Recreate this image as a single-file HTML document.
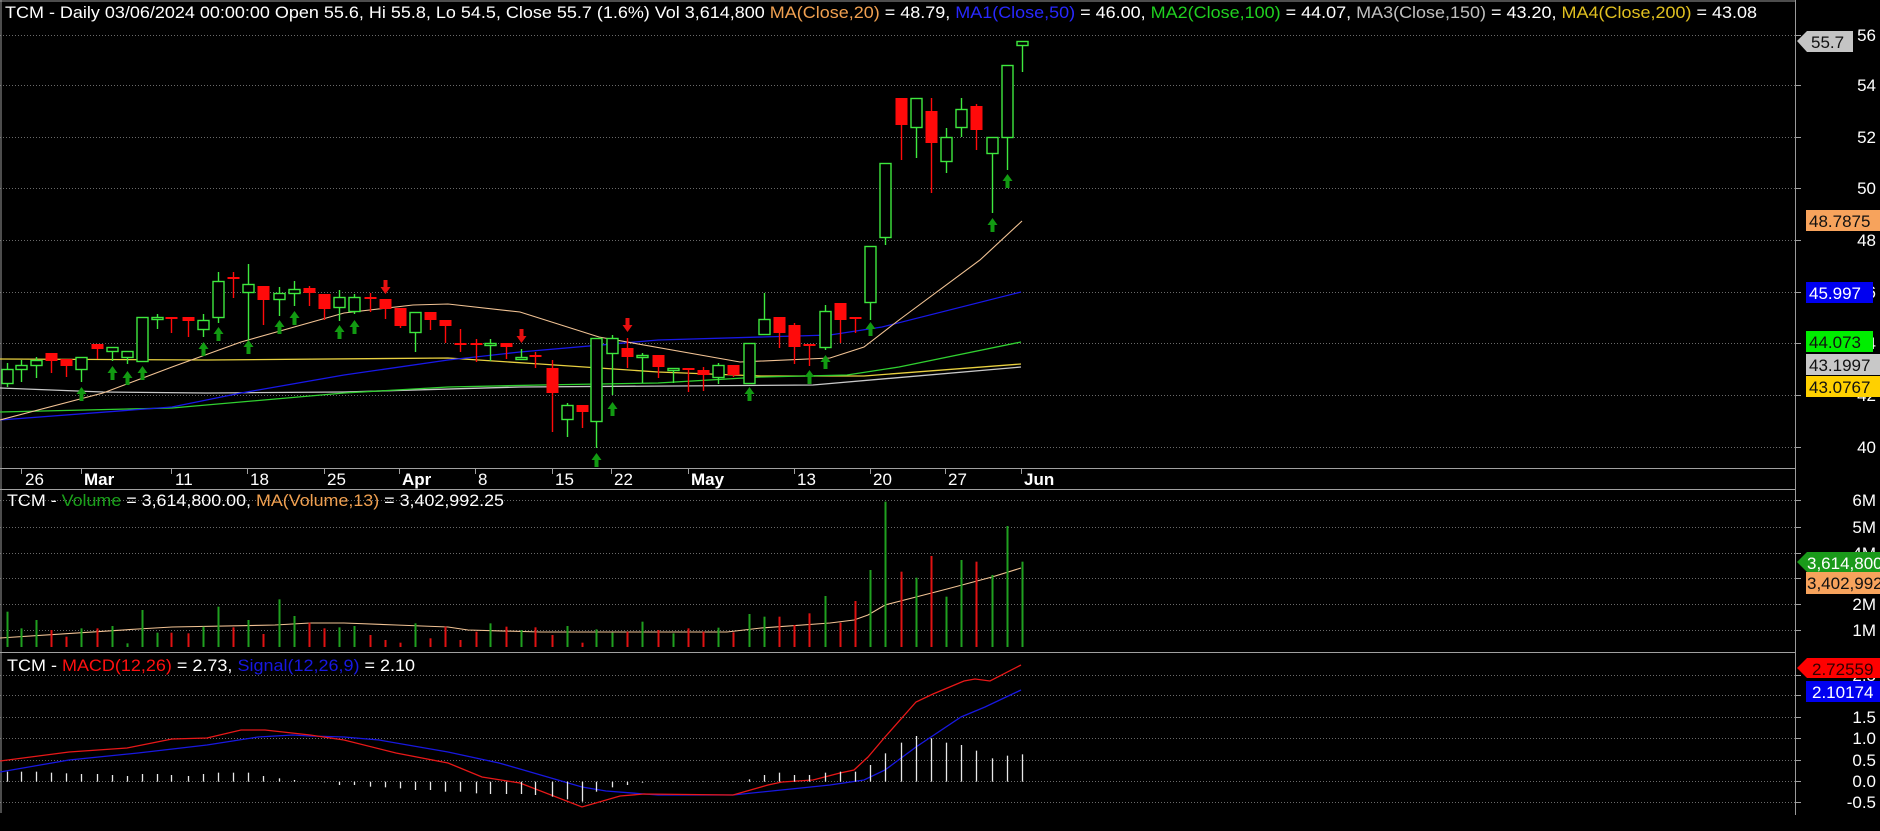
<!DOCTYPE html>
<html><head><meta charset="utf-8"><style>
html,body{margin:0;padding:0;background:#000;width:1880px;height:831px;overflow:hidden}
svg{display:block}
text{font-family:"Liberation Sans",Arial,sans-serif;font-size:17px;fill:#fff}
.ax{text-anchor:end}
.b{font-weight:bold}
</style></head><body>
<svg id="s" width="1880" height="831" xmlns="http://www.w3.org/2000/svg">
<rect width="1880" height="831" fill="#000"/>
<g id="grid" stroke="#6a6a6a" stroke-dasharray="1,2" stroke-width="1"></g>
<line x1="0" y1="1" x2="1795" y2="1" stroke="#9a9a9a"/>
<line x1="1" y1="0" x2="1" y2="813" stroke="#9a9a9a"/>
<line x1="1795.5" y1="0" x2="1795.5" y2="815" stroke="#9a9a9a"/>
<line x1="0" y1="468.5" x2="1795" y2="468.5" stroke="#a0a0a0"/>
<line x1="0" y1="489.5" x2="1795" y2="489.5" stroke="#a0a0a0"/>
<line x1="0" y1="652.5" x2="1795" y2="652.5" stroke="#a0a0a0"/>
<g id="ticks" stroke="#a0a0a0"></g>
<g id="lines" fill="none" stroke-width="1.3"></g>
<g id="cand"></g>
<g id="vol"></g>
<g id="hist" stroke="#e8e8e8" stroke-width="1.3"></g>
<g id="arr"></g>

<text x="5" y="18" textLength="1752" lengthAdjust="spacingAndGlyphs">TCM - Daily 03/06/2024 00:00:00 Open 55.6, Hi 55.8, Lo 54.5, Close 55.7 (1.6%) Vol 3,614,800 <tspan fill="#f0a050">MA(Close,20)</tspan> = 48.79, <tspan fill="#2828ff">MA1(Close,50)</tspan> = 46.00, <tspan fill="#20d020">MA2(Close,100)</tspan> = 44.07, <tspan fill="#c0c0c0">MA3(Close,150)</tspan> = 43.20, <tspan fill="#e0c020">MA4(Close,200)</tspan> = 43.08</text>
<text x="7" y="506" textLength="497" lengthAdjust="spacingAndGlyphs">TCM - <tspan fill="#1aa01a">Volume</tspan> = 3,614,800.00, <tspan fill="#f0a050">MA(Volume,13)</tspan> = 3,402,992.25</text>
<text x="7" y="671" textLength="408" lengthAdjust="spacingAndGlyphs">TCM - <tspan fill="#ff1010">MACD(12,26)</tspan> = 2.73, <tspan fill="#1818e0">Signal(12,26,9)</tspan> = 2.10</text>

<g>
<text x="25" y="485">26</text>
<text x="84" y="485" class="b">Mar</text>
<text x="175" y="485">11</text>
<text x="250" y="485">18</text>
<text x="327" y="485">25</text>
<text x="402" y="485" class="b">Apr</text>
<text x="478" y="485">8</text>
<text x="555" y="485">15</text>
<text x="614" y="485">22</text>
<text x="691" y="485" class="b">May</text>
<text x="797" y="485">13</text>
<text x="873" y="485">20</text>
<text x="948" y="485">27</text>
<text x="1024" y="485" class="b">Jun</text>
</g>

<g class="axl">
<text class="ax" x="1876" y="41">56</text>
<text class="ax" x="1876" y="91">54</text>
<text class="ax" x="1876" y="143">52</text>
<text class="ax" x="1876" y="194">50</text>
<text class="ax" x="1876" y="246">48</text>
<text class="ax" x="1876" y="298">46</text>
<text class="ax" x="1876" y="349">44</text>
<text class="ax" x="1876" y="401">42</text>
<text class="ax" x="1876" y="453">40</text>
<text class="ax" x="1876" y="506">6M</text>
<text class="ax" x="1876" y="533">5M</text>
<text class="ax" x="1876" y="559">4M</text>
<text class="ax" x="1876" y="584">3M</text>
<text class="ax" x="1876" y="610">2M</text>
<text class="ax" x="1876" y="636">1M</text>
<text class="ax" x="1876" y="681">2.5</text>
<text class="ax" x="1876" y="701">2.0</text>
<text class="ax" x="1876" y="723">1.5</text>
<text class="ax" x="1876" y="744">1.0</text>
<text class="ax" x="1876" y="766">0.5</text>
<text class="ax" x="1876" y="787">0.0</text>
<text class="ax" x="1876" y="808">-0.5</text>
</g>

<polygon points="1797,41 1807,31 1853,31 1853,52 1807,52" fill="#c4c4c4"/>
<text x="1811" y="48" style="fill:#111">55.7</text>
<rect x="1806" y="210" width="74" height="21" fill="#f7a35c"/><text x="1809" y="227" style="fill:#111">48.7875</text>
<rect x="1806" y="282" width="67" height="21" fill="#0000f0"/><text x="1809" y="299">45.997</text>
<rect x="1806" y="331" width="67" height="21" fill="#00ee00"/><text x="1809" y="348" style="fill:#111">44.073</text>
<rect x="1806" y="354" width="74" height="21" fill="#c8c8c8"/><text x="1809" y="371" style="fill:#111">43.1997</text>
<rect x="1806" y="376" width="74" height="21" fill="#ffd000"/><text x="1809" y="393" style="fill:#111">43.0767</text>
<polygon points="1797,562 1807,552 1880,552 1880,572 1807,572" fill="#1a9a1a"/><text x="1807" y="569">3,614,800</text>
<rect x="1806" y="572" width="74" height="22" fill="#f7a35c"/><text x="1807" y="589" style="fill:#111">3,402,992</text>
<polygon points="1797,668 1807,658 1880,658 1880,678 1807,678" fill="#ff0000"/><text x="1812" y="675" style="fill:#300">2.72559</text>
<rect x="1806" y="681" width="74" height="21" fill="#0000f0"/><text x="1812" y="698">2.10174</text>
</svg>
<script>
var NS="http://www.w3.org/2000/svg";
function el(p,t,a){var e=document.createElementNS(NS,t);for(var k in a)e.setAttribute(k,a[k]);document.getElementById(p).appendChild(e);return e;}
[35,85,137,188,240,292,343,395,447,500,527,553,578,604,630,675,695,717,738,760,781,802].forEach(function(y){
 el("grid","line",{x1:0,y1:y+.5,x2:1795,y2:y+.5});
 el("ticks","line",{x1:1795,y1:y+.5,x2:1801,y2:y+.5});
});
[21,81,171,247,324,399,475,552,611,688,794,870,945,1021].forEach(function(x){el("ticks","line",{x1:x+.5,y1:468,x2:x+.5,y2:474});});
var C=[[7,369,383,363,387,1],[21,365,369,360,382,1],[36,360,365,357,378,1],[51,353,361,353,373,0],[66,359,366,359,377,0],[81,357,369,357,382,1],[97,344,349,344,359,0],[112,347,351,347,361,1],[127,351,357,351,364,1],[142,317,361,317,361,1],[157,317,319,314,329,1],[171,317,318,317,333,0],[188,317,321,317,337,0],[203,320,329,314,337,1],[218,281,317,272,323,1],[233,277,279,272,298,0],[248,284,292,264,340,1],[263,286,300,286,325,0],[279,293,299,287,316,1],[294,289,293,281,306,1],[309,288,293,286,306,0],[324,294,309,294,320,0],[339,297,307,290,321,1],[354,297,311,294,314,1],[370,297,299,293,312,0],[385,299,309,299,319,0],[400,308,326,308,328,0],[415,312,332,312,352,1],[430,312,320,312,330,0],[445,320,326,320,343,0],[460,343,344,329,352,0],[476,343,344,339,362,0],[490,343,345,339,361,1],[506,343,347,343,359,0],[521,357,359,349,360,1],[535,355,357,352,368,0],[552,368,393,360,432,0],[567,405,419,403,437,1],[582,405,412,405,428,0],[596,338,421,338,448,1],[612,338,353,335,395,1],[627,348,357,338,368,0],[642,355,356,353,383,1],[658,355,367,355,378,0],[673,368,369,368,383,1],[688,368,369,368,392,0],[703,370,375,367,391,0],[718,365,377,363,384,1],[733,365,375,365,377,0],[749,343,383,343,383,1],[764,319,334,293,334,1],[779,317,333,317,348,0],[794,325,347,323,364,0],[809,344,345,344,366,0],[825,311,347,305,350,1],[840,303,320,303,343,0],[855,317,318,317,333,0],[870,246,302,246,320,1],[885,163,237,163,245,1],[901,98,125,98,160,0],[916,98,127,98,158,1],[931,111,143,98,193,0],[946,137,161,128,173,1],[961,109,127,98,137,1],[976,106,130,104,150,0],[992,137,153,137,213,1],[1007,65,137,65,170,1],[1022,41,45,41,72,1]];
var G="#3ee83e",R="#ff0a0a";
C.forEach(function(c){
 var col=c[5]?G:R,x=c[0]+.5;
 el("cand","line",{x1:x,y1:c[3],x2:x,y2:c[4],stroke:col,"stroke-width":1.4});
 var h=Math.max(c[2]-c[1],2);
 if(c[5]) el("cand","rect",{x:c[0]-5,y:c[1]+.5,width:11,height:h,fill:"#000",stroke:col,"stroke-width":1.4});
 else el("cand","rect",{x:c[0]-5.5,y:c[1],width:12,height:h,fill:col});
});
var V=[365,415,390,420,440,415,415,408,460,360,428,428,430,410,350,412,390,432,328,378,398,415,412,408,435,450,458,400,445,410,450,425,400,410,420,412,435,408,458,418,428,425,395,420,430,415,425,413,427,372,380,380,405,370,318,398,333,240,35,245,263,198,320,210,215,255,108,215];
V.forEach(function(v,i){var x=C[i][0]+.5,col=C[i][5]?"#1fa01f":"#e01212";
 el("vol","line",{x1:x,y1:490+v/3,x2:x,y2:647,stroke:col,"stroke-width":2});});
var H=[845,845,845,848,850,852,852,855,858,852,852,855,858,852,848,848,848,858,865,870,875,877,885,885,890,892,895,900,900,905,905,910,912,912,912,915,920,928,935,905,892,885,878,876,876,876,876,876,876,868,855,848,855,855,848,845,845,825,790,758,738,745,758,765,782,805,797,793];
H.forEach(function(h,i){var x=C[i][0]+.5;el("hist","line",{x1:x,y1:490+h/3,x2:x,y2:781.7});});
function pl(pts,col,w){el("lines","polyline",{points:pts.map(function(p){return p.join(",")}).join(" "),stroke:col,"stroke-width":w||1.3});}
pl([[0,359],[207,360],[448,358],[540,364],[658,372],[761,376],[864,376],[1021,364]],"#e8d040");
pl([[0,388],[103,392],[207,393],[344,392],[520,387],[813,385],[1021,367]],"#c8c8c8");
pl([[0,412],[172,408],[344,393],[448,387],[540,385],[658,383],[761,377],[847,375],[899,367],[1021,342]],"#30d030");
pl([[0,420],[172,407],[241,393],[344,375],[448,360],[520,352],[658,340],[830,335],[882,327],[1021,292]],"#1818e8");
pl([[0,420],[103,393],[172,367],[241,342],[344,313],[413,305],[448,304],[520,312],[599,337],[740,362],[830,358],[864,347],[899,320],[980,260],[1022,221]],"#f2c394",1.1);
pl([[0,638],[138,629],[172,627],[275,625],[310,623],[344,623],[396,625],[448,627],[468,630],[540,632],[727,632],[761,628],[830,623],[854,620],[868,615],[885,605],[916,597],[947,589],[992,577],[1021,568]],"#f2c394",1.1);
pl([[0,772],[69,760],[138,753],[207,745],[258,737],[293,735],[310,736],[344,737],[379,740],[448,752],[499,763],[520,769],[582,787],[606,791],[658,795],[733,795],[830,785],[864,780],[885,770],[916,747],[961,717],[985,707],[1021,690]],"#1818e0");
pl([[0,761],[69,752],[127,748],[172,739],[207,738],[241,730],[265,730],[310,735],[344,740],[396,753],[448,763],[482,777],[520,783],[582,807],[620,796],[644,794],[733,795],[768,785],[782,782],[813,780],[840,773],[854,770],[868,757],[885,737],[916,702],[933,694],[964,681],[975,679],[990,681],[1021,665]],"#e81818");
function up(i,y){var x=C[i][0]+.5;el("arr","path",{d:"M"+x+","+y+" l-5,7 h3 v7 h4 v-7 h3 z",fill:"#129a12"});}
function dn(i,y){var x=C[i][0]+.5;el("arr","path",{d:"M"+x+","+(y+14)+" l-5,-7 h3 v-7 h4 v7 h3 z",fill:"#e81010"});}
[[5,387],[7,366],[8,371],[9,366],[13,342],[14,327],[16,340],[18,320],[19,311],[22,325],[23,320],[39,453],[40,402],[49,387],[53,370],[54,355],[57,322],[65,218],[66,174]].forEach(function(a){up(a[0],a[1]);});
[[25,280],[34,329],[41,318]].forEach(function(a){dn(a[0],a[1]);});
</script>
</body></html>
